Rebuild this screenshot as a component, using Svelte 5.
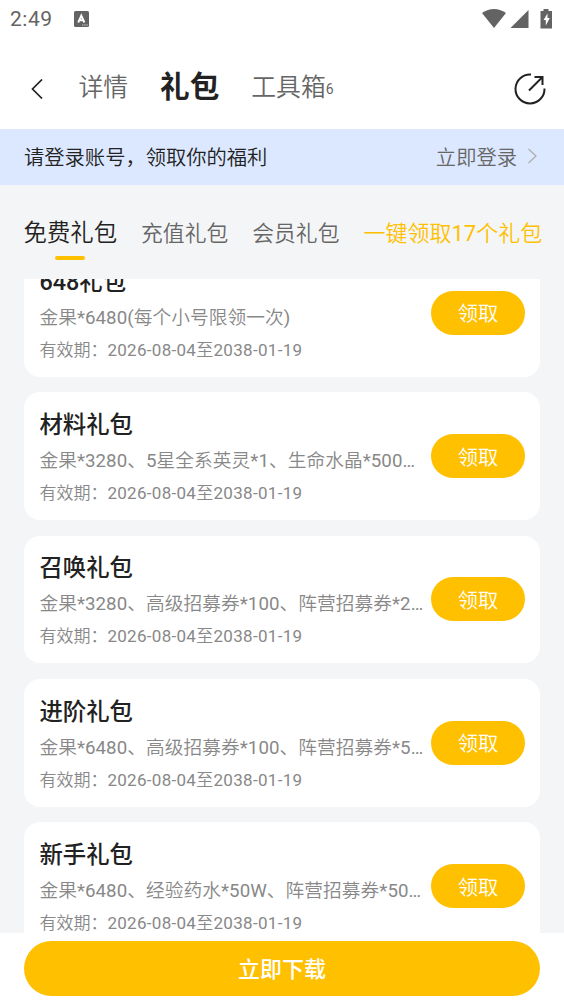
<script lang="ts">
  interface Gift {
    title: string;
    content: string;
  }

  const tabs = ['免费礼包', '充值礼包', '会员礼包'];
  const validity = '2026-08-04至2038-01-19';

  const gifts: Gift[] = [
    { title: '648礼包', content: '金果*6480(每个小号限领一次)' },
    { title: '材料礼包', content: '金果*3280、5星全系英灵*1、生命水晶*500…' },
    { title: '召唤礼包', content: '金果*3280、高级招募券*100、阵营招募券*2…' },
    { title: '进阶礼包', content: '金果*6480、高级招募券*100、阵营招募券*5…' },
    { title: '新手礼包', content: '金果*6480、经验药水*50W、阵营招募券*50…' },
  ];

  let activeTab = $state(0);
</script>

<div class="screen">
  <div class="status">
    <span class="clock">2:49</span>
    <svg class="app-mark" width="15" height="16" viewBox="0 0 15 16">
      <rect x="0" y="0" width="15" height="16" rx="1.5" fill="#636363" />
      <path d="M4.200 11.500 7.300 4.500 10.400 11.500M5.300 9.300h4" fill="none" stroke="#fff" stroke-width="1.900" />
      <path d="M8 14h6" stroke="#ccc" stroke-width="1" stroke-dasharray="1.500 .7" />
    </svg>
    <svg class="system" width="72" height="20" viewBox="0 0 72 20">
      <path d="M0 4Q12 -4 24 4L12 19Z" fill="#636363" />
      <path d="M28.500 19 46.500 1V19Z" fill="#636363" />
      <path d="M58.500 2h3V0h5v2h3.500v17.500H58.500Z" fill="#636363" />
      <path d="M65.500 4.500 61.500 11h2.300v5.500l4-7.500h-2.300Z" fill="#fff" />
    </svg>
  </div>

  <header>
    <svg class="back" width="12" height="20" viewBox="0 0 12 20">
      <path d="M11 .5 1.500 10l9.500 9.500" fill="none" stroke="#222" stroke-width="1.700" />
    </svg>
    <nav>
      <span>详情</span>
      <strong>礼包</strong>
      <span>工具箱<sup>6</sup></span>
    </nav>
    <svg class="share" width="32" height="32" viewBox="0 0 32 32" fill="none" stroke="#222" stroke-width="2">
      <path d="M17 1.500A14.500 14.500 0 1 0 30.500 15.500M15 17.500 28.500 4M20.500 4h8v8" />
    </svg>
  </header>

  <div class="login">
    <span>请登录账号，领取你的福利</span>
    <span class="login-link">立即登录
      <svg width="9" height="16" viewBox="0 0 9 16"><path d="m.5 1 7.500 7-7.500 7" fill="none" stroke="#aaa" stroke-width="1.200" /></svg>
    </span>
  </div>

  <div class="tabs">
    {#each tabs as tab, i}
      <button class:active={activeTab === i} onclick={() => (activeTab = i)}>{tab}</button>
    {/each}
    <button class="claim-all">一键领取17个礼包</button>
  </div>

  <main>
    <div class="list">
      {#each gifts as gift}
        <article>
          <div class="info">
            <h3>{gift.title}</h3>
            <p class="content">{gift.content}</p>
            <p class="date">有效期：<span>{validity}</span></p>
          </div>
          <button class="claim">领取</button>
        </article>
      {/each}
    </div>
  </main>

  <footer><button>立即下载</button></footer>
</div>

<style>
  :global(body) {
    background: #f4f5f7;
  }
  .screen {
    width: 564px;
    height: 1004px;
    display: flex;
    flex-direction: column;
    overflow: hidden;
    background: #f4f5f7;
    color: #222;
    font-family: Roboto, "Noto Sans CJK SC DemiLight", "Noto Sans CJK SC", sans-serif;
  }
  button {
    border: 0;
    padding: 0;
    background: none;
    color: inherit;
    font: inherit;
    white-space: nowrap;
    cursor: pointer;
  }
  .status {
    flex: 0 0 40px;
    display: flex;
    align-items: center;
    box-sizing: border-box;
    padding: 0 10px 2px;
    background: #fff;
    color: #636363;
  }
  .clock {
    width: 64px;
    font-size: 21px;
    letter-spacing: 0.5px;
  }
  .system {
    margin-left: auto;
  }
  header {
    flex: 0 0 89px;
    display: flex;
    align-items: center;
    box-sizing: border-box;
    padding: 9px 18px 0 31px;
    background: #fff;
  }
  nav {
    display: flex;
    align-items: center;
    gap: 32px;
    margin: 0 0 9px 35.500px;
    height: 60px;
    color: #666;
    font-size: 24.800px;
  }
  nav strong,
  h3,
  footer button {
    font-family: Roboto, "Noto Sans CJK SC", sans-serif;
  }
  nav strong {
    color: #222;
    font-size: 29.600px;
    font-weight: 700;
  }
  sup {
    font-size: 14px;
    line-height: 0;
    vertical-align: 2px;
  }
  .share {
    margin-left: auto;
  }
  .login {
    flex: 0 0 56px;
    display: flex;
    align-items: center;
    justify-content: space-between;
    box-sizing: border-box;
    padding: 0 27px 2px 24px;
    background: #dce8ff;
    font-size: 20.300px;
  }
  .login-link {
    display: flex;
    align-items: center;
    gap: 11px;
    color: #666;
  }
  .tabs {
    flex: 0 0 94px;
    display: flex;
    align-items: center;
    gap: 24px;
    box-sizing: border-box;
    padding: 0 24px 2px 23.500px;
    color: #666;
    font-size: 21.800px;
  }
  .tabs .active {
    position: relative;
    color: #222;
    font-size: 23.400px;
  }
  .tabs .active::after {
    content: "";
    position: absolute;
    left: 31.500px;
    bottom: -12px;
    width: 30px;
    height: 4px;
    border-radius: 2px;
    background: #ffc000;
  }
  .tabs .claim-all {
    margin-left: auto;
    color: #ffc000;
    font-size: 22px;
  }
  main {
    flex: 1;
    min-height: 0;
    overflow: hidden;
    padding: 0 24px;
  }
  .list {
    display: flex;
    flex-direction: column;
    gap: 15.500px;
    margin-top: -30px;
  }
  article {
    flex: 0 0 127.800px;
    display: flex;
    align-items: center;
    box-sizing: border-box;
    padding: 0 15px 0 15.400px;
    border-radius: 16px;
    background: #fff;
  }
  .info {
    flex: 1;
    min-width: 0;
    padding-top: 2px;
  }
  h3,
  p {
    margin: 0;
    white-space: nowrap;
  }
  h3 {
    font-size: 23.400px;
    font-weight: 500;
    line-height: 36px;
  }
  .content {
    color: #888;
    font-size: 18.700px;
    line-height: 37px;
    letter-spacing: 0.060px;
  }
  .date {
    color: #888;
    font-size: 17px;
    line-height: 27px;
  }
  .date span {
    letter-spacing: 0.300px;
  }
  .claim {
    flex: none;
    width: 94px;
    height: 44px;
    padding-bottom: 1px;
    border-radius: 22px;
    background: #ffc000;
    color: #fff;
    font-size: 20.300px;
  }
  footer {
    flex: 0 0 71px;
    box-sizing: border-box;
    padding: 8px 24px;
    background: #fff;
  }
  footer button {
    width: 100%;
    height: 55px;
    padding-bottom: 3px;
    border-radius: 28px;
    background: #ffc000;
    color: #fff;
    font-size: 22px;
    font-weight: 500;
  }
</style>
